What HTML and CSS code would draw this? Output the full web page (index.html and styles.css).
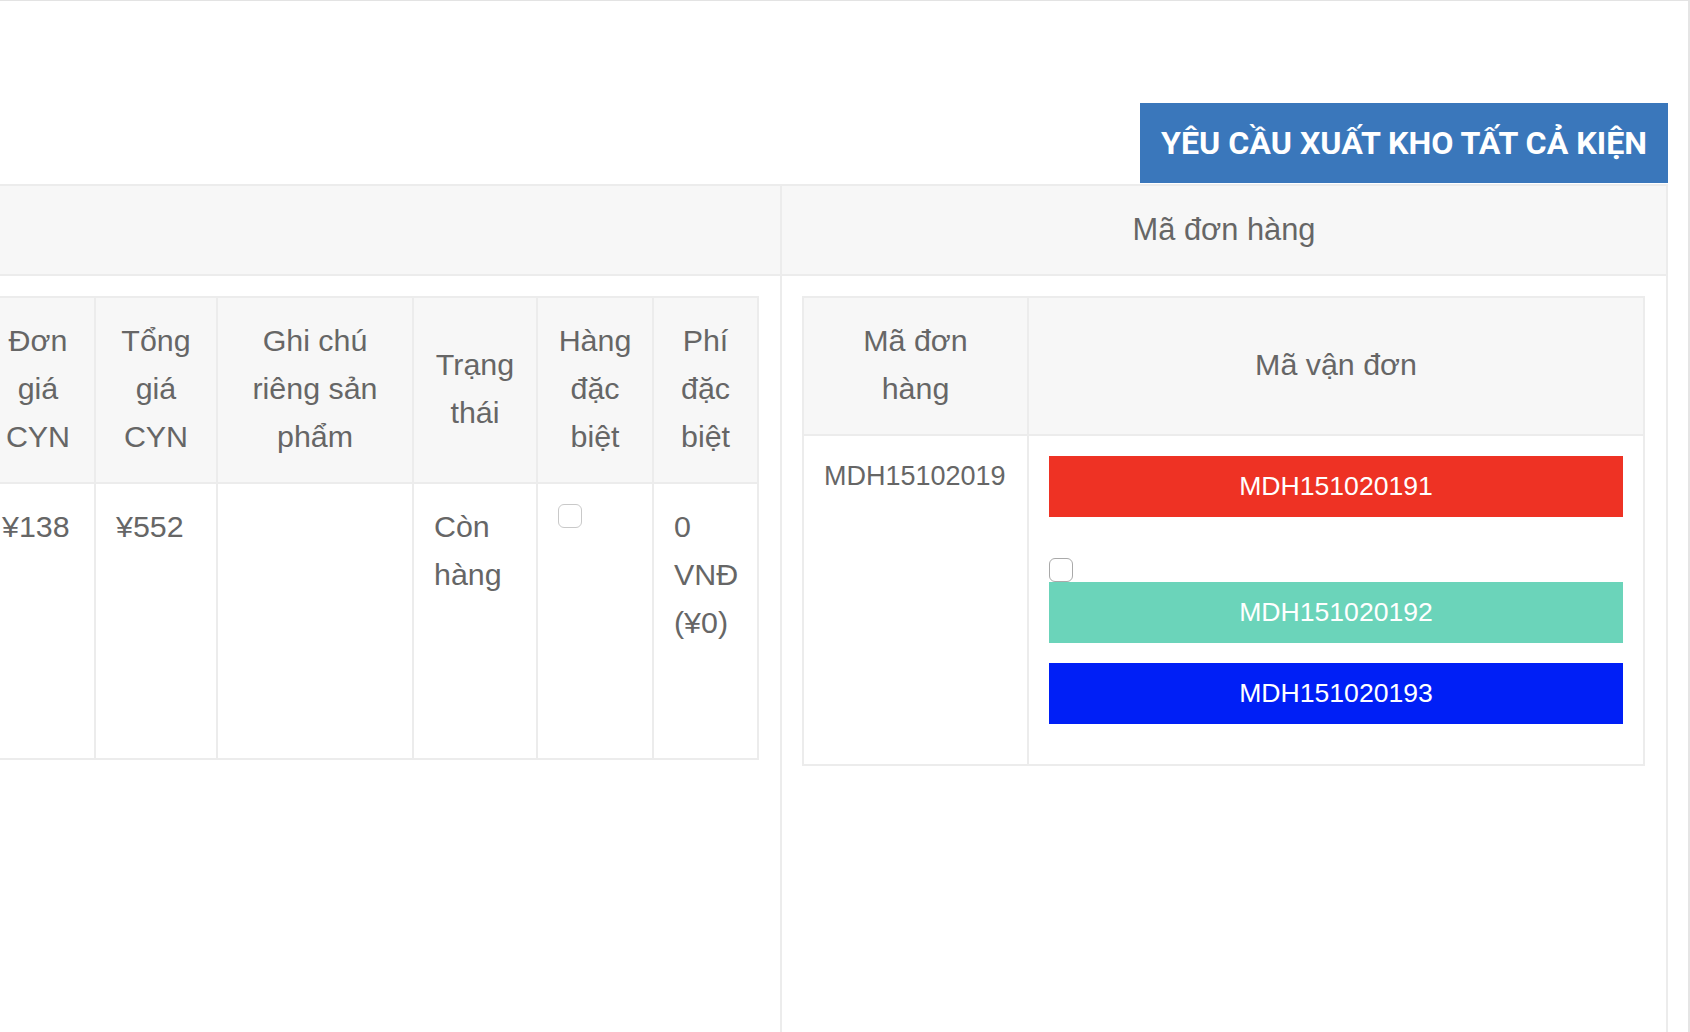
FILE: index.html
```html
<!DOCTYPE html>
<html lang="vi">
<head>
<meta charset="utf-8">
<title>Yêu cầu xuất kho</title>
<link rel="stylesheet" href="styles.css">
</head>
<body>
<div class="page">
  <div class="toolbar">
    <button class="btn-export" type="button">YÊU CẦU XUẤT KHO TẤT CẢ KIỆN</button>
  </div>
  <table class="outer">
    <colgroup><col class="oc-l"><col class="oc-r"></colgroup>
    <thead>
      <tr><th class="oh-left"></th><th class="oh-right">Mã đơn hàng</th></tr>
    </thead>
    <tbody>
      <tr>
        <td class="ob-left">
          <table class="items">
            <colgroup>
              <col class="c1"><col class="c2"><col class="c3"><col class="c4"><col class="c5"><col class="c6">
            </colgroup>
            <thead>
              <tr>
                <th>Đơn giá CYN</th>
                <th>Tổng giá CYN</th>
                <th>Ghi chú riêng sản phẩm</th>
                <th>Trạng thái</th>
                <th>Hàng đặc biệt</th>
                <th>Phí đặc biệt</th>
              </tr>
            </thead>
            <tbody>
              <tr>
                <td>¥138</td>
                <td>¥552</td>
                <td></td>
                <td>Còn hàng</td>
                <td><span class="check check-light"></span></td>
                <td>0 VNĐ (¥0)</td>
              </tr>
            </tbody>
          </table>
        </td>
        <td class="ob-right">
          <table class="codes">
            <colgroup><col class="k1"><col class="k2"></colgroup>
            <thead>
              <tr><th>Mã đơn<br>hàng</th><th>Mã vận đơn</th></tr>
            </thead>
            <tbody>
              <tr>
                <td class="order-code">MDH15102019</td>
                <td class="bills">
                  <div class="bill bill-red">MDH151020191</div>
                  <span class="check check-dark"></span>
                  <div class="bill bill-green">MDH151020192</div>
                  <div class="bill bill-blue">MDH151020193</div>
                </td>
              </tr>
            </tbody>
          </table>
        </td>
      </tr>
    </tbody>
  </table>
</div>
</body>
</html>
```

FILE: styles.css
```css
html, body {
  margin: 0;
  padding: 0;
  background: #fff;
}

body {
  font-family: "Liberation Sans", Arial, sans-serif;
  color: #666;
}

.page {
  width: 1690px;
  height: 1032px;
  box-sizing: border-box;
  border-top: 1px solid #e3e3e3;
  border-right: 2px solid #e5e5e5;
  padding-right: 20px;
  overflow: hidden;
}

.toolbar {
  display: flex;
  justify-content: flex-end;
  padding-top: 102px;
}

.btn-export {
  width: 528px;
  height: 80px;
  padding: 0;
  margin: 0;
  border: 0;
  border-radius: 0;
  background: #3a77bb;
  color: #fff;
  font-family: Roboto, "Liberation Sans", Arial, sans-serif;
  font-weight: 700;
  font-size: 32.2px;
  text-align: center;
  cursor: pointer;
}

table {
  border-collapse: collapse;
  border-spacing: 0;
}

.outer {
  width: 1668px;
  table-layout: fixed;
  margin-top: 1px;
}

.oc-l { width: 781px; }

.outer > thead > tr > th {
  background: #f7f7f7;
  border: 2px solid #ececec;
  padding: 20px;
  font-size: 30.8px;
  line-height: 48px;
  font-weight: 400;
  color: #666;
  text-align: center;
}

.outer > thead > tr > th.oh-left,
.outer > tbody > tr > td.ob-left {
  border-left: 0;
}

.outer > tbody > tr > td {
  border: 2px solid #ececec;
  border-bottom: 0;
  padding: 20px;
  vertical-align: top;
  height: 800px;
}

.items {
  table-layout: fixed;
  width: 777px;
  margin-left: -40px;
}

.items .c1 { width: 114px; }
.items .c2 { width: 122px; }
.items .c3 { width: 196px; }
.items .c4 { width: 124px; }
.items .c5 { width: 116px; }
.items .c6 { width: 105px; }

.items th,
.items td,
.codes th,
.codes td {
  border: 2px solid #ececec;
  padding: 18px 20px 22px;
  font-size: 30.4px;
  line-height: 48px;
  color: #666;
}

.items th,
.codes th {
  background: #f7f7f7;
  font-weight: 400;
  text-align: center;
  vertical-align: middle;
}

.items td {
  vertical-align: top;
  text-align: left;
  height: 234px;
}

.codes {
  table-layout: fixed;
  width: 843px;
}

.codes .k1 { width: 225px; }

.codes td {
  vertical-align: top;
  padding: 20px;
}

.codes td.order-code {
  font-size: 27px;
  line-height: 40px;
  color: #666;
}

.bill {
  height: 61px;
  line-height: 61px;
  text-align: center;
  color: #fff;
  font-size: 26.6px;
  margin-bottom: 20px;
}

.bill-red { background: #ee3224; margin-bottom: 41px; }
.bill-green { background: #6bd4ba; }
.bill-blue { background: #001ff6; }

.check {
  display: block;
  width: 24px;
  height: 24px;
  box-sizing: border-box;
  border-radius: 6px;
  background: #fff;
}

.check-light {
  border: 1.5px solid #c9c9c9;
  margin-top: 2px;
}

.check-dark {
  border: 1.5px solid #a9a9a9;
}
```
